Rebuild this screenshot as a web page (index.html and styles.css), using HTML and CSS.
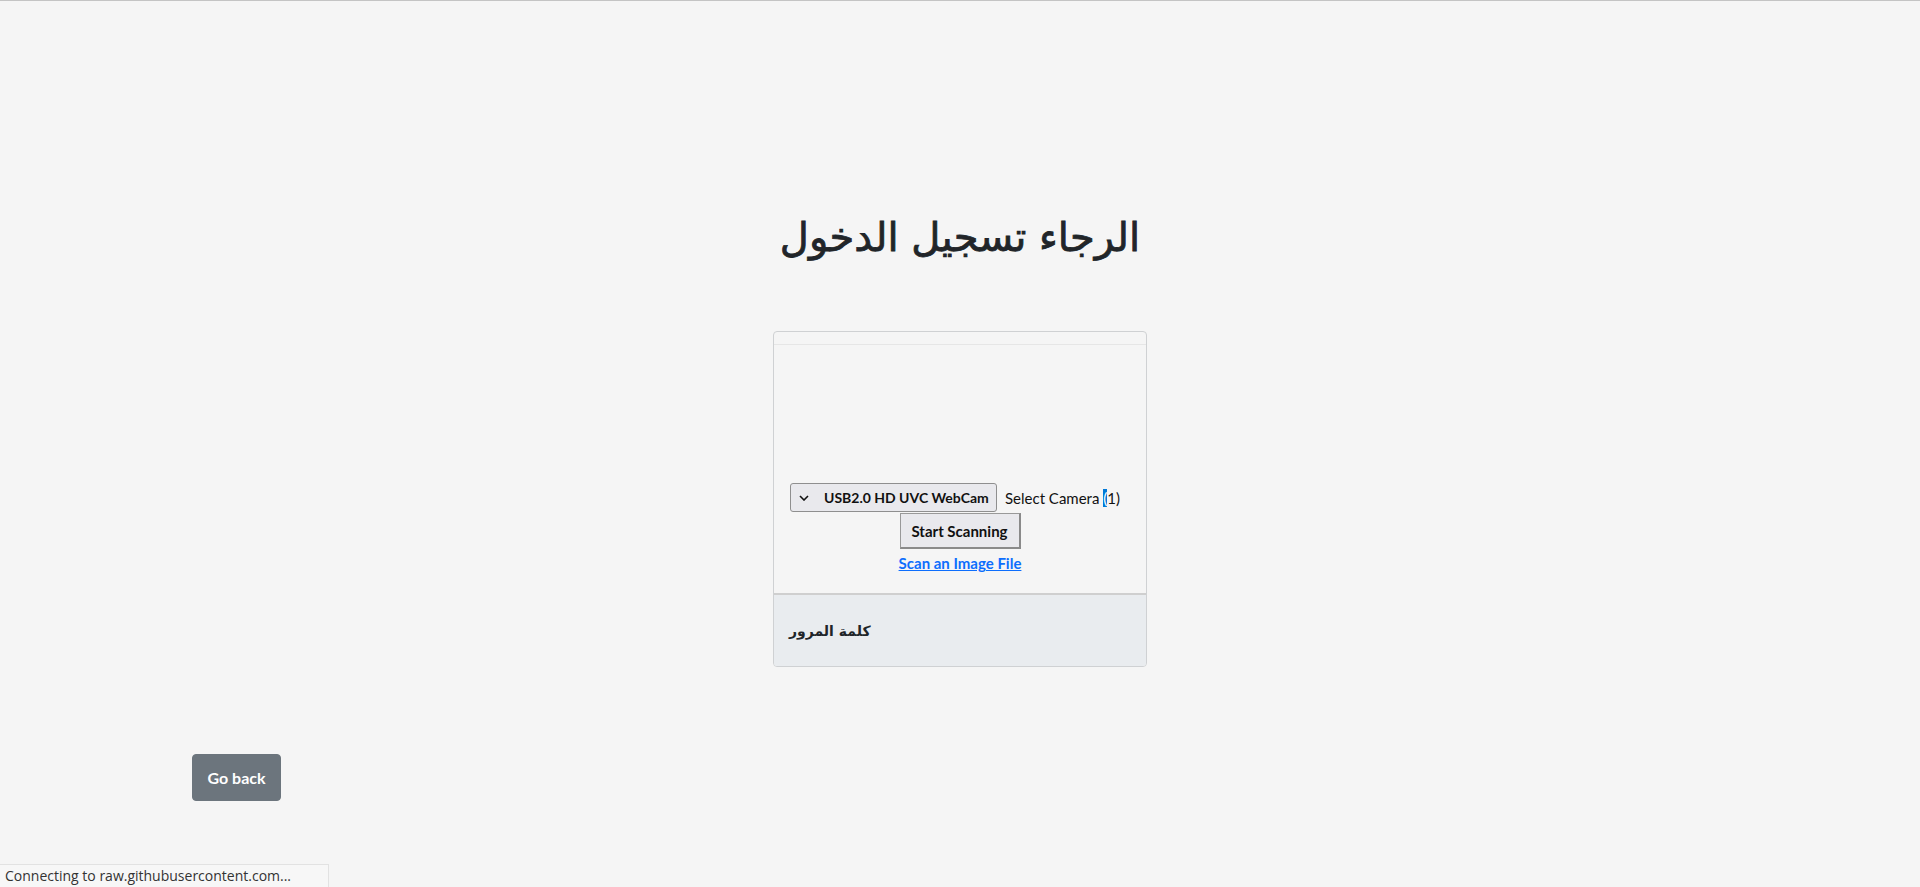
FILE: index.html
```html
<!DOCTYPE html>
<html lang="ar" dir="rtl">
<head>
<meta charset="utf-8">
<title>تسجيل الدخول</title>
<link rel="stylesheet" href="styles.css">
</head>
<body>
<div class="topline"></div>
<main class="page">
  <h1 class="title">الرجاء تسجيل الدخول</h1>
  <section class="card">
    <div class="reader">
      <div class="reader-head"></div>
      <div class="reader-view"></div>
      <div class="reader-dash" dir="ltr">
        <div class="cam-row">
          <span class="cam-select"><span class="chev"><svg width="10" height="6" viewBox="0 0 10 6"><path d="M1 1 L5 5 L9 1" fill="none" stroke="#111" stroke-width="1.6"/></svg></span>USB2.0 HD UVC WebCam</span>
          <span class="cam-label">Select Camera <span class="sel">(</span>1)</span>
        </div>
        <button class="start-btn">Start Scanning</button>
        <a class="scan-link" href="#">Scan an Image File</a>
      </div>
    </div>
    <div class="card-foot">
      <span class="pw">كلمة المرور</span>
    </div>
  </section>
  <div class="back-row" dir="ltr">
    <button class="back-btn">Go back</button>
  </div>
</main>
<div class="status" dir="ltr">Connecting to raw.githubusercontent.com...</div>
</body>
</html>
```
FILE: styles.css
```css
html, body {
  margin: 0;
  padding: 0;
  height: 100%;
}
body {
  background: #f5f5f5;
  font-family: "Noto Sans", "DejaVu Sans", sans-serif;
  color: #212529;
  overflow: hidden;
}
.topline {
  height: 1px;
  background: #c4c4c4;
}
.page {
  display: flex;
  flex-direction: column;
  align-items: center;
}
.title {
  margin: 208px 0 0 0;
  font-size: 40px;
  font-weight: 400;
  -webkit-text-stroke: 0.8px #212529;
  line-height: 56px;
  font-family: "DejaVu Sans", "Noto Sans", sans-serif;
  color: #212529;
}
.card {
  margin-top: 66px;
  width: 372px;
  border: 1px solid #cfd1d3;
  border-radius: 4px;
  overflow: hidden;
  background: #f5f5f5;
}
.reader {
  display: flex;
  flex-direction: column;
}
.reader-head {
  height: 12px;
  border-bottom: 1px solid #e6e6e6;
}
.reader-view {
  height: 138px;
}
.reader-dash {
  display: flex;
  flex-direction: column;
  align-items: center;
  padding-bottom: 21px;
  border-bottom: 2px solid #cfcfcf;
  font-family: "Lato", "DejaVu Sans", sans-serif;
}
.cam-row {
  display: flex;
  align-items: center;
  gap: 8px;
  margin-right: 10px;
  white-space: nowrap;
}
.cam-select {
  display: flex;
  align-items: center;
  box-sizing: border-box;
  width: 207px;
  height: 29px;
  border: 1px solid #8f8f8f;
  border-radius: 3px;
  background: #e9e9ed;
  font-size: 14px;
  font-weight: 700;
  color: #111;
  padding-left: 8px;
  white-space: nowrap;
}
.chev {
  display: inline-flex;
  width: 18px;
  margin-right: 7px;
}
.cam-label {
  font-size: 15px;
  color: #111;
}
.sel {
  background: #0078d7;
  color: #fff;
}
.start-btn {
  margin-top: 1px;
  width: 121px;
  height: 36px;
  border: 1px solid #999;
  border-right: 2px solid #8a8a8a;
  border-bottom: 2px solid #8a8a8a;
  background: #e9e9ed;
  font-family: "Lato", "DejaVu Sans", sans-serif;
  font-size: 15px;
  font-weight: 700;
  color: #111;
  padding: 0;
}
.scan-link {
  margin-top: 5px;
  font-size: 15px;
  font-weight: 700;
  color: #0d6efd;
  text-decoration: underline;
}
.card-foot {
  height: 71px;
  background: #e9ecef;
  display: flex;
  align-items: center;
  padding-left: 15px;
  direction: ltr;
}
.pw {
  font-size: 14px;
  font-weight: 700;
  color: #212529;
  font-family: "DejaVu Sans", sans-serif;
  margin-right: auto;
}
.back-row {
  width: 100%;
  padding-left: 192px;
  box-sizing: border-box;
  margin-top: 87px;
}
.back-btn {
  width: 89px;
  height: 47px;
  border: 1px solid #6c757d;
  border-radius: 4px;
  background: #6c757d;
  color: #fff;
  font-family: "Lato", "DejaVu Sans", sans-serif;
  font-size: 16px;
  font-weight: 700;
  padding: 0;
}
.status {
  position: fixed;
  left: 0;
  bottom: 0;
  width: 329px;
  height: 23px;
  box-sizing: border-box;
  background: #f7f7f7;
  border-top: 1px solid #e2e2e2;
  border-right: 1px solid #e2e2e2;
  font-family: "Open Sans", "DejaVu Sans", sans-serif;
  font-size: 14px;
  line-height: 22px;
  color: #333;
  padding-left: 5px;
}
```
